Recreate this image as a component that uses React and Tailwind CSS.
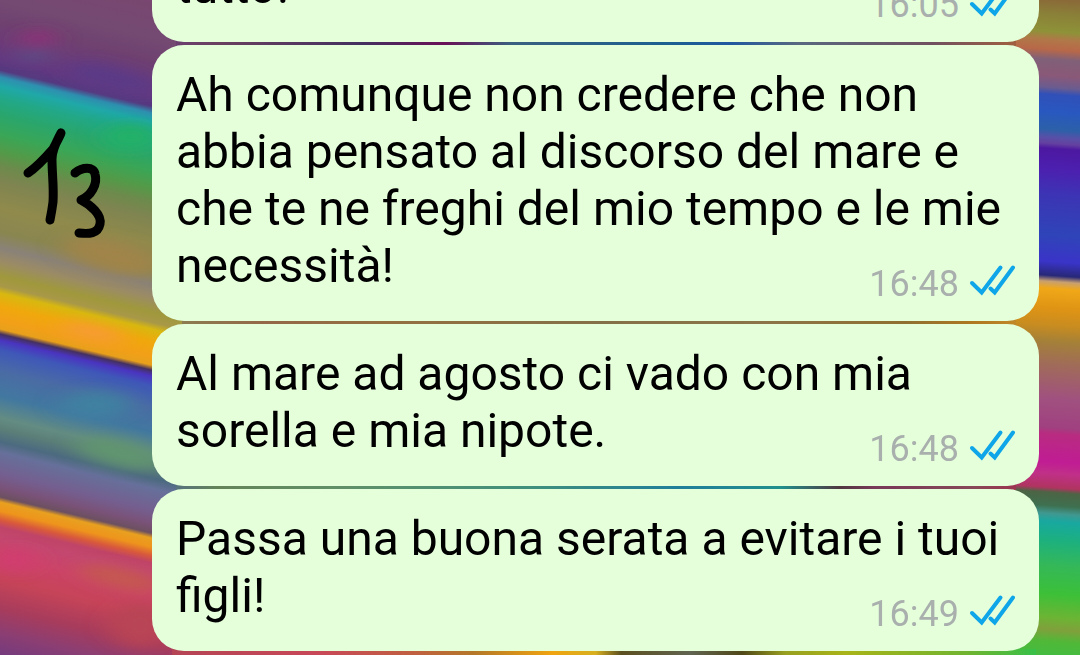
import React from 'react';

const messages = [
  { id: 1, text: 'tutto!', time: '16:05' },
  {
    id: 2,
    text: 'Ah comunque non credere che non abbia pensato al discorso del mare e che te ne freghi del mio tempo e le mie necessità!',
    time: '16:48',
  },
  { id: 3, text: 'Al mare ad agosto ci vado con mia sorella e mia nipote.', time: '16:48' },
  { id: 4, text: 'Passa una buona serata a evitare i tuoi figli!', time: '16:49' },
];

// [y, colour] stops of the painted stripes, top to bottom
const leftStripes = [
  [-45, '#7a4670'], [0, '#744a72'], [22, '#6f4270'], [42, '#6c3c78'], [58, '#643880'],
  [70, '#553a80'], [77, '#2f8fb0'], [86, '#1fa8a8'], [98, '#22a888'], [115, '#2aa66c'],
  [135, '#3aa656'], [152, '#539a48'], [166, '#6d8a4c'], [182, '#7f8450'], [208, '#908a4c'],
  [232, '#8a8650'], [248, '#8a8278'], [262, '#9c8c64'], [276, '#a0983c'], [286, '#a89848'],
  [293, '#d8b810'], [306, '#f0a80c'], [320, '#f2a018'], [329, '#e8a01c'], [334, '#453060'],
  [340, '#4a34c0'], [350, '#3f58b8'], [372, '#4a6ca4'], [396, '#4278a0'], [418, '#648c82'],
  [428, '#5c8078'], [442, '#4c6a80'], [452, '#66709a'], [474, '#745f90'], [488, '#7a5278'],
  [497, '#6c5060'], [502, '#e8a020'], [511, '#ee941c'], [520, '#d8583c'], [527, '#c04468'],
  [538, '#c44870'], [556, '#cc4468'], [580, '#c64458'], [608, '#a83c5c'], [632, '#8c3e72'],
  [660, '#6f3a80'],
];

const rightStripes = [
  [0, '#8a6a38'], [14, '#8a8038'], [32, '#8e9238'], [40, '#b07848'], [50, '#b86848'],
  [60, '#806078'], [76, '#8a5878'], [88, '#6a5c90'], [95, '#3050b8'], [112, '#2858c0'],
  [130, '#2c60a8'], [138, '#5850a8'], [144, '#6440a0'], [149, '#4c18a0'], [170, '#4c20b0'],
  [195, '#3c34b4'], [235, '#2f44b8'], [262, '#3a34c8'], [276, '#282878'], [282, '#c8a070'],
  [289, '#f0a818'], [308, '#e09414'], [326, '#c88c20'], [342, '#a48038'], [364, '#a06c58'],
  [400, '#a05080'], [428, '#a04080'], [434, '#b82c80'], [462, '#c01c94'], [474, '#c03088'],
  [488, '#b03460'], [493, '#4c6444'], [506, '#3e7050'], [514, '#409890'], [522, '#18a8a0'],
  [540, '#1cb080'], [566, '#34b858'], [594, '#3cc038'], [618, '#6cb434'], [630, '#80a03c'],
  [642, '#50b838'], [670, '#38c048'],
];

// colours that show through the narrow gaps between bubbles
const seams = [
  { id: 'seam1', x: 176, y: 40, width: 840, stops: [[0, '#6a3f70'], [0.05, '#6a4060'], [0.22, '#443060'], [0.32, '#6a1058'], [0.4, '#3a6080'], [0.58, '#1c6090'], [0.66, '#2058a0'], [0.74, '#586880'], [0.9, '#705060'], [1, '#a06040']] },
  { id: 'seam2', x: 182, y: 320, width: 834, stops: [[0, '#8c7c50'], [0.1, '#946848'], [0.25, '#947040'], [0.5, '#847048'], [0.7, '#8c7448'], [0.87, '#907030'], [0.95, '#b07820'], [1, '#c08828']] },
  { id: 'seam3', x: 176, y: 484, width: 840, stops: [[0, '#56727e'], [0.05, '#648458'], [0.2, '#609068'], [0.42, '#40907c'], [0.6, '#207e9a'], [0.72, '#20908c'], [0.79, '#503840'], [0.83, '#783858'], [0.95, '#884858'], [1, '#9c3450']] },
  { id: 'seam4', x: 172, y: 649, width: 864, stops: [[0, '#b44454'], [0.17, '#c84858'], [0.28, '#c06040'], [0.35, '#b47828'], [0.44, '#f0a410'], [0.49, '#d8b020'], [0.52, '#5c5020'], [0.6, '#606450'], [0.66, '#504818'], [0.71, '#98a020'], [0.78, '#a8b418'], [0.92, '#70b430'], [1, '#38c048']] },
];

const Wallpaper = () => (
  <svg
    className="absolute inset-0 h-full w-full"
    viewBox="0 0 1080 655"
    preserveAspectRatio="none"
    aria-hidden="true"
  >
    <defs>
      <linearGradient id="left" gradientUnits="userSpaceOnUse" x1="0" y1="-60" x2="0" y2="700">
        {leftStripes.map(([y, color]) => (
          <stop key={y} offset={(y + 60) / 760} stopColor={color} />
        ))}
      </linearGradient>
      <linearGradient id="right" gradientUnits="userSpaceOnUse" x1="0" y1="0" x2="0" y2="700">
        {rightStripes.map(([y, color]) => (
          <stop key={y} offset={y / 700} stopColor={color} />
        ))}
      </linearGradient>
      {seams.map((seam) => (
        <linearGradient key={seam.id} id={seam.id}>
          {seam.stops.map(([offset, color]) => (
            <stop key={offset} offset={offset} stopColor={color} />
          ))}
        </linearGradient>
      ))}
      <filter id="soft" x="-20%" y="-20%" width="140%" height="140%">
        <feGaussianBlur stdDeviation="12 6" />
      </filter>
    </defs>

    <rect x="0" y="-400" width="600" height="1300" fill="url(#left)" transform="skewY(13.4)" />
    <g transform="translate(1059 0) skewY(4)">
      <rect x="-459" y="-100" width="500" height="900" fill="url(#right)" />
    </g>

    {/* paint smudges */}
    <g filter="url(#soft)">
      <ellipse cx="38" cy="38" rx="18" ry="8" fill="#8e3078" />
      <ellipse cx="34" cy="56" rx="20" ry="5" fill="#5a5088" />
      <ellipse cx="112" cy="78" rx="48" ry="12" fill="#5c3a86" transform="rotate(13 112 78)" />
      <ellipse cx="130" cy="137" rx="28" ry="14" fill="#20b068" />
      <ellipse cx="112" cy="256" rx="50" ry="16" fill="#a08448" transform="rotate(13 112 256)" />
      <ellipse cx="92" cy="332" rx="32" ry="6" fill="#f89840" transform="rotate(13 92 332)" />
      <ellipse cx="95" cy="405" rx="36" ry="14" fill="#4080a0" />
      <ellipse cx="120" cy="453" rx="44" ry="13" fill="#609470" transform="rotate(13 120 453)" />
      <ellipse cx="14" cy="560" rx="24" ry="12" fill="#d03c70" />
      <ellipse cx="120" cy="578" rx="42" ry="10" fill="#c45850" transform="rotate(13 120 578)" />
      <ellipse cx="140" cy="625" rx="30" ry="22" fill="#b84454" />
    </g>

    {seams.map((seam) => (
      <rect key={seam.id} x={seam.x} y={seam.y} width={seam.width} height="6" fill={`url(#${seam.id})`} />
    ))}

    {/* handwritten number */}
    <g fill="none" stroke="#000" strokeLinecap="round" strokeLinejoin="round" strokeWidth="9">
      <path d="M28 173C37 167 46 157 53 149C56 143 59 138 61 133C57 141 52 149 52 159C52 174 54 188 53 202C52 210 51 215 50 220" />
      <path d="M75 173C82 167 94 166 95 174C98 184 91 196 81 200C91 205 102 215 100 224C98 234 89 234 79 233" />
    </g>
  </svg>
);

const ReadTicks = () => (
  <svg
    width="46"
    height="34"
    viewBox="0 0 46 34"
    fill="none"
    stroke="#0fa5e9"
    strokeWidth="4"
    strokeLinecap="round"
    role="img"
    aria-label="Letto"
  >
    <path d="M3 20L12.7 29.4L31.5 4.5" />
    <path d="M21.5 25.5L25.7 29.4L44 4.5" />
  </svg>
);

const Bubble = ({ text, time }) => (
  <li className="flow-root shrink-0 rounded-[32px] bg-[#e5ffdb] px-6 pt-[21px] pb-4 text-[48px] leading-[57px] text-black">
    <span>{text}</span>
    <div className="float-right mt-[26px] flex items-start gap-2.5">
      <time className="text-[36px] leading-[42px] text-[#a9afad]">{time}</time>
      <ReadTicks />
    </div>
  </li>
);

const App = () => {
  return (
    <main className="relative h-screen overflow-hidden font-['Roboto',sans-serif]">
      <Wallpaper />
      <ul className="relative flex h-full flex-col justify-end gap-[3px] pr-[41px] pb-1 pl-[152px]">
        {messages.map((message) => (
          <Bubble key={message.id} text={message.text} time={message.time} />
        ))}
      </ul>
    </main>
  );
};

export default App;
